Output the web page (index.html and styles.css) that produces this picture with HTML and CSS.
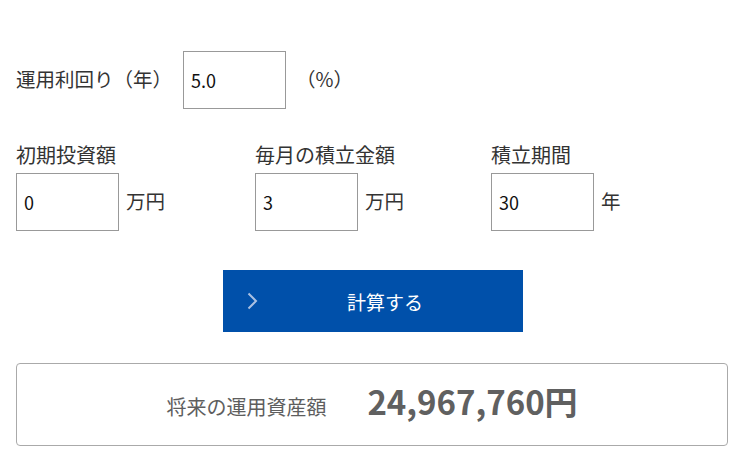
FILE: index.html
```html
<!DOCTYPE html>
<html lang="ja">
<head>
<meta charset="utf-8">
<title>積立シミュレーション</title>
<link rel="stylesheet" href="styles.css">
</head>
<body>
<div class="calc">
  <div class="rate-row">
    <span class="rate-label">運用利回り（年）</span>
    <input class="field" type="text" value="5.0">
    <span class="rate-unit">（%）</span>
  </div>
  <div class="grid">
    <div class="col">
      <div class="col-label">初期投資額</div>
      <div class="col-input">
        <input class="field" type="text" value="0">
        <span class="unit">万円</span>
      </div>
    </div>
    <div class="col">
      <div class="col-label">毎月の積立金額</div>
      <div class="col-input">
        <input class="field" type="text" value="3">
        <span class="unit">万円</span>
      </div>
    </div>
    <div class="col">
      <div class="col-label">積立期間</div>
      <div class="col-input">
        <input class="field" type="text" value="30">
        <span class="unit">年</span>
      </div>
    </div>
  </div>
  <button class="calc-btn" type="button">
    <svg class="chev" width="11" height="18" viewBox="0 0 11 18"><path d="M1.5 1.5 L9 9 L1.5 16.5" fill="none" stroke="currentColor" stroke-width="2"/></svg>
    <span>計算する</span>
  </button>
  <div class="result">
    <span class="result-label">将来の運用資産額</span>
    <span class="result-value">24,967,760円</span>
  </div>
</div>
</body>
</html>
```

FILE: styles.css
```css
* { box-sizing: border-box; }
body {
  margin: 0;
  font-family: "Noto Sans CJK JP", "Noto Sans", sans-serif;
  color: #333;
  background: #fff;
}
.calc {
  width: 712px;
  margin-left: 16px;
  padding-top: 51px;
}
.rate-row {
  display: flex;
  align-items: center;
}
.rate-label {
  width: 167px;
  font-size: 19.5px;
  line-height: 26px;
  padding-bottom: 3px;
}
.rate-unit {
  margin-left: 10px;
  font-size: 19.5px;
  line-height: 26px;
  padding-bottom: 3px;
}
.field {
  width: 103px;
  height: 58px;
  border: 1px solid #999;
  border-radius: 0;
  padding: 0 7px;
  font-family: "Noto Sans CJK JP", "Noto Sans", sans-serif;
  font-size: 18px;
  color: #111;
  background: #fff;
  outline: none;
}
.grid {
  display: grid;
  grid-template-columns: 239px 236px auto;
  margin-top: 33px;
}
.col-label {
  font-size: 20px;
  line-height: 26px;
  margin-bottom: 5px;
}
.col-input {
  display: flex;
  align-items: center;
  gap: 7px;
}
.unit {
  font-size: 19.5px;
  padding-bottom: 4px;
}
.calc-btn {
  position: relative;
  display: flex;
  align-items: center;
  justify-content: center;
  width: 300px;
  height: 62px;
  margin: 39px 0 0 207px;
  padding: 0 0 0 24px;
  border: none;
  background: #0050aa;
  color: #fff;
  font-family: "Noto Sans CJK JP", "Noto Sans", sans-serif;
  font-size: 19px;
}
.chev {
  position: absolute;
  left: 24px;
  top: 22px;
  color: #a9c0e2;
}
.result {
  display: flex;
  align-items: baseline;
  justify-content: center;
  gap: 41px;
  height: 83px;
  margin-top: 31px;
  padding: 13px 0 0 0;
  border: 1px solid #aaa;
  border-radius: 4px;
  color: #5e5e5e;
}
.result-label {
  font-size: 20px;
}
.result-value {
  font-size: 33px;
  font-weight: 700;
  color: #606060;
}
```
